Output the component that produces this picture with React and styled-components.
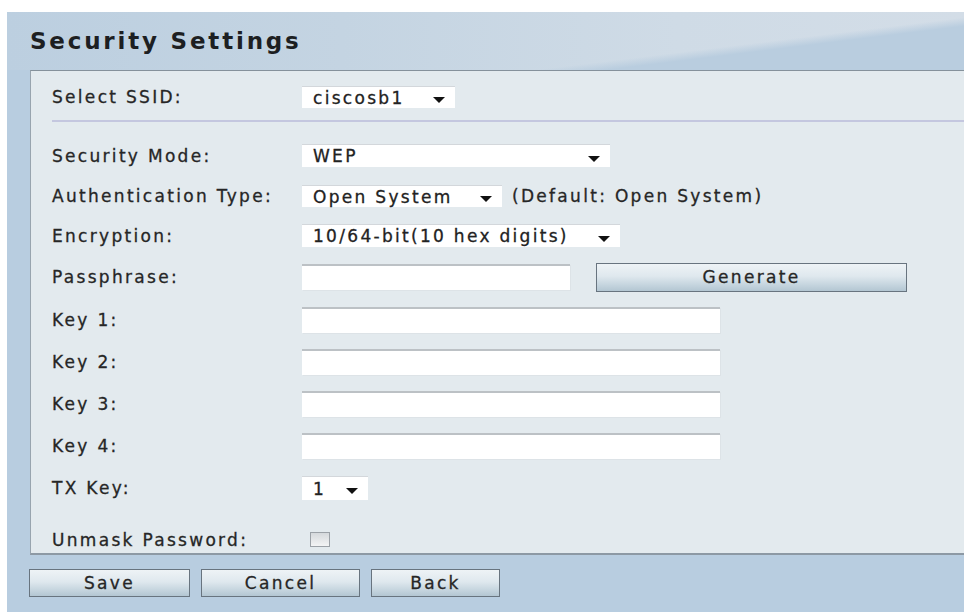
import React from "react";
import styled, { createGlobalStyle } from "styled-components";

const GlobalStyle = createGlobalStyle`
  html, body {
    margin: 0;
    padding: 0;
    background: #fff;
  }
  body {
    font-family: "DejaVu Sans", "Liberation Sans", sans-serif;
  }
`;

const Frame = styled.div`
  margin: 12px 0 0 7px;
  min-height: 600px;
  background: #b8cde0;
  display: flex;
  flex-direction: column;
`;

const Header = styled.div`
  height: 58px;
  display: flex;
  align-items: center;
  padding-left: 23px;
  background:
    linear-gradient(173deg, rgba(185, 204, 222, 0) 70%, #b9cddf 75%),
    linear-gradient(90deg, #bccfe0 0%, #c4d4e2 35%, #cfdbe6 70%, #d3dde7 100%);
`;

const Title = styled.h1`
  margin: 0;
  font-size: 23px;
  font-weight: bold;
  letter-spacing: 2.8px;
  color: #1d1f22;
`;

const Panel = styled.div`
  margin-left: 23px;
  background: #e3eaee;
  border-top: 1px solid #85919b;
  border-left: 1px solid #98a4ae;
  border-bottom: 2px solid #8d99a4;
  padding: 5px 0 0 21px;
`;

const Row = styled.div`
  display: flex;
  align-items: center;
  height: ${(p) => p.$h}px;
  margin-top: ${(p) => p.$gap || 0}px;
`;

const Label = styled.div`
  width: 250px;
  flex-shrink: 0;
  font-size: 17px;
  letter-spacing: 2.3px;
  color: #262626;
  -webkit-text-stroke: 0.3px #262626;
  white-space: nowrap;
`;

const Divider = styled.div`
  height: 2px;
  margin: 2px 0 13px;
  background: #c4c7df;
`;

const SelectBox = styled.div`
  width: ${(p) => p.$w}px;
  height: ${(p) => p.$h || 22}px;
  box-sizing: border-box;
  display: flex;
  align-items: center;
  justify-content: space-between;
  padding: 0 10px 0 11px;
  background: #fff;
  border-top: 1px solid #d3d7db;
  font-size: 17px;
  letter-spacing: 2.3px;
  color: #222;
  -webkit-text-stroke: 0.3px #222;
  white-space: nowrap;
`;

const Arrow = styled.svg`
  flex-shrink: 0;
  margin-top: 5px;
`;

const Note = styled.span`
  margin-left: 10px;
  font-size: 17px;
  letter-spacing: 2.3px;
  color: #262626;
  -webkit-text-stroke: 0.3px #262626;
  white-space: nowrap;
`;

const TextBox = styled.input`
  width: ${(p) => p.$w}px;
  height: 26px;
  box-sizing: border-box;
  margin: 0;
  padding: 0 6px;
  border: none;
  border-top: 2px solid #bcc1c5;
  background: #fff;
  box-shadow: 1px 1px 0 #dde3e7;
  outline: none;
`;

const Button = styled.button`
  width: ${(p) => p.$w}px;
  height: ${(p) => p.$h || 28}px;
  margin: 0;
  padding: 0;
  box-sizing: border-box;
  border: 1px solid #68747f;
  background: linear-gradient(#eef3f6 0%, #dfe8ee 45%, #c3d3dd 80%, #b3c6d2 100%);
  font-family: "DejaVu Sans", "Liberation Sans", sans-serif;
  font-size: 17px;
  letter-spacing: 2.3px;
  color: #262626;
  -webkit-text-stroke: 0.3px #262626;
`;

const GenerateButton = styled(Button)`
  margin-left: 26px;
`;

const Check = styled.span`
  width: 20px;
  height: 15px;
  margin-left: 8px;
  box-sizing: border-box;
  border: 1px solid #9ba1a7;
  background: linear-gradient(#d5d9dc, #f3f4f5);
`;

const Actions = styled.div`
  display: flex;
  gap: 11px;
  margin: 14px 0 0 22px;
`;

const Caret = () => (
  <Arrow width="12" height="6" viewBox="0 0 12 6">
    <path d="M0 0H12L6 6Z" fill="#111" />
  </Arrow>
);

const Select = ({ value, w, h }) => (
  <SelectBox $w={w} $h={h}>
    <span>{value}</span>
    <Caret />
  </SelectBox>
);

const keys = ["Key 1:", "Key 2:", "Key 3:", "Key 4:"];

export default function App() {
  return (
    <>
      <GlobalStyle />
      <Frame>
        <Header>
          <Title>Security Settings</Title>
        </Header>
        <Panel>
          <Row $h={42}>
            <Label>Select SSID:</Label>
            <Select value="ciscosb1" w={153} />
          </Row>
          <Divider />
          <Row $h={41}>
            <Label>Security Mode:</Label>
            <Select value="WEP" w={308} h={23} />
          </Row>
          <Row $h={40}>
            <Label>Authentication Type:</Label>
            <Select value="Open System" w={200} />
            <Note>(Default: Open System)</Note>
          </Row>
          <Row $h={39}>
            <Label>Encryption:</Label>
            <Select value="10/64-bit(10 hex digits)" w={318} h={23} />
          </Row>
          <Row $h={44}>
            <Label>Passphrase:</Label>
            <TextBox $w={268} />
            <GenerateButton $w={311} $h={29}>Generate</GenerateButton>
          </Row>
          {keys.map((k) => (
            <Row key={k} $h={42}>
              <Label>{k}</Label>
              <TextBox $w={418} />
            </Row>
          ))}
          <Row $h={42}>
            <Label>TX Key:</Label>
            <Select value="1" w={66} h={24} />
          </Row>
          <Row $h={27} $gap={17}>
            <Label>Unmask Password:</Label>
            <Check />
          </Row>
        </Panel>
        <Actions>
          <Button $w={161}>Save</Button>
          <Button $w={159}>Cancel</Button>
          <Button $w={129}>Back</Button>
        </Actions>
      </Frame>
    </>
  );
}
